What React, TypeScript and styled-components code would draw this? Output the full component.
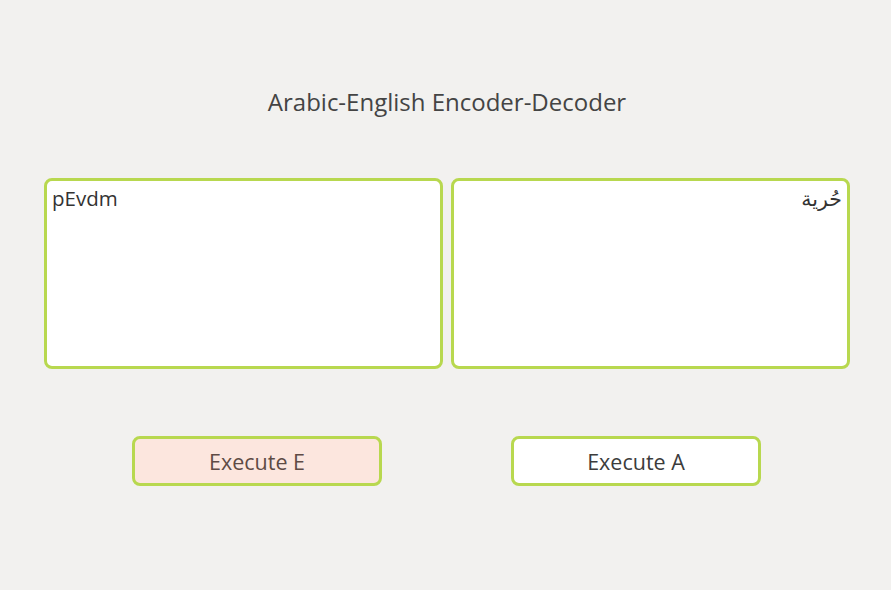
import React, { useState } from "react";
import styled, { createGlobalStyle } from "styled-components";

const Global = createGlobalStyle`
  html, body { margin: 0; padding: 0; }
  body {
    background: #f2f1ef;
    font-family: "Open Sans", "Noto Sans", "DejaVu Sans", sans-serif;
    color: #3c3c3c;
  }
`;

const Page = styled.div`
  width: 891px;
  height: 590px;
  display: flex;
  flex-direction: column;
  box-sizing: border-box;
  padding: 86px 41px 0 44px;
`;

const Title = styled.h1`
  margin: 0;
  font-weight: 400;
  font-size: 24px;
  line-height: 32px;
  text-align: center;
  color: #444444;
`;

const Editors = styled.div`
  margin-top: 60px;
  display: grid;
  grid-template-columns: 1fr 1fr;
  gap: 8px;
`;

const Area = styled.textarea<{ $rtl?: boolean }>`
  box-sizing: border-box;
  height: 191px;
  resize: none;
  border: 3px solid #b8d84f;
  border-radius: 8px;
  background: #ffffff;
  padding: 3px 5px;
  font-family: "Open Sans", "Noto Sans", "DejaVu Sans", sans-serif;
  font-size: 20.5px;
  line-height: 28px;
  color: #333333;
  outline: none;
  direction: ${(p) => (p.$rtl ? "rtl" : "ltr")};
  text-align: ${(p) => (p.$rtl ? "right" : "left")};
`;

const Buttons = styled.div`
  margin-top: 67px;
  display: flex;
  justify-content: space-between;
  padding: 0 89px 0 88px;
`;

const Button = styled.button<{ $hot?: boolean }>`
  box-sizing: border-box;
  width: 250px;
  height: 50px;
  border: 3px solid #b8d84f;
  border-radius: 8px;
  background: ${(p) => (p.$hot ? "#fce6de" : "#ffffff")};
  color: ${(p) => (p.$hot ? "#5e4b45" : "#3c3c3c")};
  font-family: "Open Sans", "Noto Sans", "DejaVu Sans", sans-serif;
  font-size: 21.5px;
  cursor: pointer;
`;

export default function App() {
  const [en, setEn] = useState("pEvdm");
  const [ar, setAr] = useState("حُرية");
  return (
    <>
      <Global />
      <Page>
        <Title>Arabic-English Encoder-Decoder</Title>
        <Editors>
          <Area value={en} onChange={(e) => setEn(e.target.value)} />
          <Area $rtl value={ar} onChange={(e) => setAr(e.target.value)} />
        </Editors>
        <Buttons>
          <Button $hot>Execute E</Button>
          <Button>Execute A</Button>
        </Buttons>
      </Page>
    </>
  );
}
